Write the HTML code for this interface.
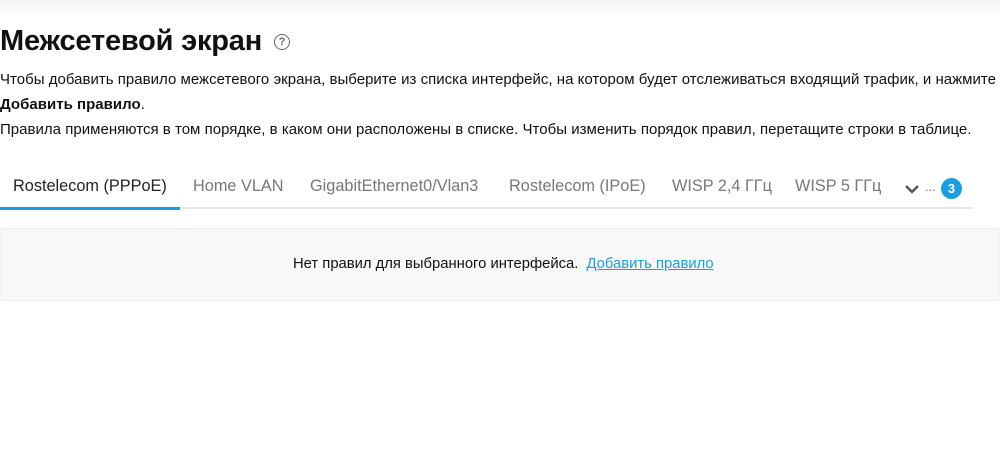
<!DOCTYPE html>
<html><head><meta charset="utf-8"><style>
body{margin:0;width:1000px;height:469px;background:#fff;font-family:"Liberation Sans","Noto Sans CJK SC",sans-serif;color:#111;position:relative;overflow:hidden}
.top{position:absolute;left:0;top:0;width:1000px;height:16px;background:linear-gradient(#f3f3f3,#fff)}
h1{position:absolute;left:0;top:25px;margin:0;font-size:29px;font-weight:bold;letter-spacing:-0.2px}
.q{position:absolute;left:274px;top:34px;width:14px;height:14px;border:1.5px solid #666;border-radius:50%;font-size:11px;color:#666;text-align:center;line-height:14px;font-weight:bold}
.p{position:absolute;left:0;font-size:15px;white-space:nowrap;letter-spacing:0.02px}
.tabs{position:absolute;left:0;top:177px;font-size:16.3px;color:#777;white-space:nowrap}
.tabs span{position:absolute;top:0}
.line{position:absolute;left:0;top:207px;width:973px;height:2px;background:#e8e8e8}
.act{position:absolute;left:0;top:207px;width:180px;height:3px;background:#1a9ee0}
.badge{position:absolute;left:941px;top:178px;width:21px;height:21px;border-radius:50%;background:#1a9ee0;color:#fff;font-weight:bold;font-size:13px;text-align:center;line-height:21px}
.panel{position:absolute;left:0;top:228px;width:998px;height:71px;background:#f8f8f8;border:1px solid #eee;border-radius:3px}
.msg{position:absolute;left:293px;top:256px;font-size:14.8px;white-space:nowrap}
.msg a{color:#1a9ee0;text-decoration:underline;margin-left:4px}
</style></head><body>
<div class="top"></div>
<h1>Межсетевой экран</h1><div class="q">?</div>
<div class="p" style="top:71px">Чтобы добавить правило межсетевого экрана, выберите из списка интерфейс, на котором будет отслеживаться входящий трафик, и нажмите</div>
<div class="p" style="top:96px"><b>Добавить правило</b>.</div>
<div class="p" style="top:121px">Правила применяются в том порядке, в каком они расположены в списке. Чтобы изменить порядок правил, перетащите строки в таблице.</div>
<div class="tabs">
<span style="left:13px;color:#222">Rostelecom (PPPoE)</span>
<span style="left:193px">Home VLAN</span>
<span style="left:310px">GigabitEthernet0/Vlan3</span>
<span style="left:509px">Rostelecom (IPoE)</span>
<span style="left:672px">WISP 2,4 ГГц</span>
<span style="left:795px">WISP 5 ГГц</span>
<span style="left:925px;top:2px;font-size:13px">...</span>
</div>
<svg style="position:absolute;left:904px;top:183px" width="16" height="12" viewBox="0 0 16 12"><path d="M2 3 L8 9 L14 3" fill="none" stroke="#555" stroke-width="2.5"/></svg>
<div class="badge">3</div>
<div class="line"></div><div class="act"></div>
<div class="panel"></div>
<div class="msg">Нет правил для выбранного интерфейса. <a>Добавить правило</a></div>
</body></html>
